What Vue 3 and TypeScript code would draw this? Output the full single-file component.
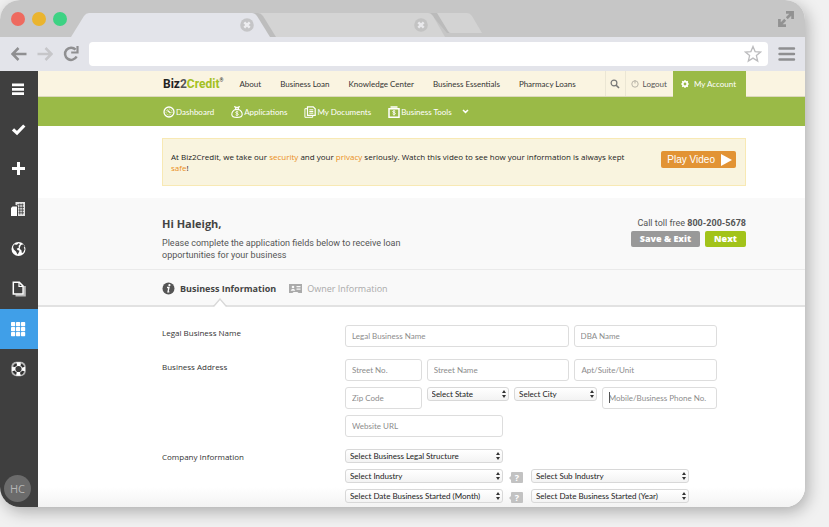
<script setup lang="ts">
import { ref } from 'vue'

interface NavLink {
  label: string
  icon?: string
}

const siteLinks: string[] = ['About', 'Business Loan', 'Knowledge Center', 'Business Essentials', 'Pharmacy Loans']
const accountLinks: NavLink[] = [
  { label: 'Dashboard', icon: 'gauge' },
  { label: 'Applications', icon: 'bag' },
  { label: 'My Documents', icon: 'docs' },
  { label: 'Business Tools', icon: 'tools' },
]
const sideItems: NavLink[] = [
  { label: 'Menu', icon: 'menu' },
  { label: 'Tasks', icon: 'check' },
  { label: 'Add', icon: 'plus' },
  { label: 'Companies', icon: 'building' },
  { label: 'Web', icon: 'globe' },
  { label: 'Files', icon: 'files' },
  { label: 'Apps', icon: 'grid' },
  { label: 'Help', icon: 'buoy' },
]
const activeItem = ref<string>('Apps')
const gridCells: number[] = [0, 5, 10]
</script>

<template>
  <div class="page">
    <div class="window">
      <header class="tab-bar">
        <svg class="tab-shapes" width="490" height="37" viewBox="0 0 490 37" aria-hidden="true">
          <path d="M430 13h8l12 20h-3z" fill="#bbb" />
          <path d="M437 13h30q3 0 5 3l10 17h-31q-2 0-3-2z" fill="#d3d3d3" />
          <path d="M256 13h172q3 0 5 3l12 21H262z" fill="#d4d4d4" />
          <path d="M252 13h6q3 0 5 3l13 21h-8z" fill="#bdbdbd" />
          <path d="M71 37l13-21q2-3 5-3h163q3 0 5 3l13 21z" fill="#e3e4ea" />
        </svg>
        <span class="dots"><i class="dot red"></i><i class="dot amber"></i><i class="dot green"></i></span>
        <button class="close first" aria-label="Close tab">
          <svg width="14" height="14" viewBox="0 0 14 14"><circle cx="7" cy="7" r="6.8" fill="#c5c5c7" /><path d="M4.3 4.3l5.4 5.4M9.7 4.3L4.3 9.7" stroke="#ededf0" stroke-width="2.4" /></svg>
        </button>
        <button class="close second" aria-label="Close tab">
          <svg width="14" height="14" viewBox="0 0 14 14"><circle cx="7" cy="7" r="6.8" fill="#c3c3c3" /><path d="M4.3 4.3l5.4 5.4M9.7 4.3L4.3 9.7" stroke="#e9e9ec" stroke-width="2.4" /></svg>
        </button>
        <button class="expand" aria-label="Full screen">
          <svg width="16" height="16" viewBox="0 0 16 16" fill="none" stroke="#929292" stroke-width="2.700"><path d="M8 1.400h6.600V8M14 2L8.800 7.200" /><path d="M1.400 8v6.600H8M2 14l5.200-5.200" /></svg>
        </button>
      </header>

      <div class="toolbar">
        <button aria-label="Back"><svg width="16" height="14" viewBox="0 0 16 14"><path d="M15.500 7H2M7.500 1L1.500 7l6 6" fill="none" stroke="#8f8f91" stroke-width="2.500" /></svg></button>
        <button aria-label="Forward"><svg width="16" height="14" viewBox="0 0 16 14"><path d="M.5 7H14M8.500 1l6 6-6 6" fill="none" stroke="#c6c6c9" stroke-width="2.500" /></svg></button>
        <button aria-label="Reload"><svg width="16" height="16" viewBox="0 0 16 16"><path d="M12.600 3.600A6.100 6.100 0 1 0 13.600 10.500" fill="none" stroke="#8f8f91" stroke-width="2.500" /><path d="M14.500 0v6.500H8.200" fill="none" stroke="#8f8f91" stroke-width="2.200" /></svg></button>
        <label class="address">
          <input type="text" aria-label="Address" />
          <svg width="18" height="18" viewBox="0 0 18 18"><path d="M9 1.500l2.100 5.100 5.500.4-4.200 3.600 1.300 5.400L9 13.100 4.300 16l1.300-5.400L1.400 7l5.500-.4z" fill="none" stroke="#bcbcbe" stroke-width="1.300" /></svg>
        </label>
        <button aria-label="Browser menu"><svg width="18" height="14" viewBox="0 0 18 14"><path d="M1.500 1.500h14.500M1.500 7h14.500M1.500 12.500h14.500" stroke="#8f8f91" stroke-width="2.400" stroke-linecap="round" /></svg></button>
      </div>

      <div class="body">
        <aside class="sidebar">
          <button v-for="item in sideItems" :key="item.label" class="side-item" :class="{ active: item.label === activeItem }" :aria-label="item.label" @click="activeItem = item.label">
            <svg width="16" height="16" viewBox="0 0 16 16">
              <path v-if="item.icon === 'menu'" d="M1 1.500h12v2.800H1zM1 5.900h12v2.800H1zM1 10.300h12v2.800H1z" fill="#fff" />
              <path v-else-if="item.icon === 'check'" d="M2 8.300l4 3.800 7.300-7.600" fill="none" stroke="#fff" stroke-width="3.200" />
              <path v-else-if="item.icon === 'plus'" d="M7.500 1v13M1 7.500h13" stroke="#fff" stroke-width="3" />
              <template v-else-if="item.icon === 'building'">
                <path d="M0 7l1.500-1.400H6V15H0z" fill="#fff" />
                <path d="M4.500 4V1H14v14H7V4.600z" fill="#e4e4e4" />
                <path d="M6 3.700h6.500M7.500 6.400H13M7.500 9.100H13M7.500 11.800H13M8.800 2.500v11M11.300 2.500v11" stroke="#3f3f3f" stroke-width=".8" />
              </template>
              <template v-else-if="item.icon === 'globe'">
                <circle cx="7.500" cy="8" r="7" fill="#fff" />
                <path d="M3 3.500l3 .2 1.600-1.500 1.400.8-1.500 2 .5 1.500-2.300 1.200.8 1.300 2 .8-1 2.200-1 1.500-1.500-3-2.200-2L2 6zM10 4l2.600-.8 1.200 2.600-1 .6.8 1.800-1.400 3.300-1.300.6-.6-3-1.600-1 .3-2z" fill="#3f3f3f" />
              </template>
              <template v-else-if="item.icon === 'files'">
                <path d="M4.500 14.500h9.400V5" fill="none" stroke="#bbb" stroke-width="1.800" />
                <path d="M2.300 1.300h6l3.800 3.800V13H2.300z" fill="none" stroke="#fff" stroke-width="1.500" />
                <path d="M8 1.500v4h4.300" fill="none" stroke="#fff" stroke-width="1.200" />
              </template>
              <template v-else-if="item.icon === 'grid'">
                <template v-for="y in gridCells" :key="y"><rect v-for="x in gridCells" :key="x" :x="x" :y="y + 1" width="4.200" height="4.200" rx=".7" fill="#fff" /></template>
              </template>
              <template v-else>
                <rect x=".3" y=".8" width="14.400" height="14.400" rx="5" fill="#b5b5b5" />
                <circle cx="7.500" cy="8" r="5.100" fill="#fff" stroke="#303030" stroke-width="2.400" stroke-dasharray="4 4" stroke-dashoffset="-2" />
                <path d="M5.200 1.300h4.600L8.800 4.800H6.200zM5.200 14.700h4.600l-1-3.500H6.200zM.9 5.700v4.600l3.400-1.100V6.800zM14.100 5.700v4.600l-3.400-1.100V6.800z" fill="#fff" />
                <circle cx="7.500" cy="8" r="3.100" fill="#3c3c3c" />
              </template>
            </svg>
          </button>
          <span class="avatar">HC</span>
        </aside>

        <main class="content">
          <nav class="site-nav">
            <a href="#" class="logo">Biz<span class="two">2</span><span class="credit">Credit</span><sup>®</sup></a>
            <a v-for="link in siteLinks" :key="link" href="#" class="site-link">{{ link }}</a>
            <span class="user-links">
              <button class="search" aria-label="Search"><svg width="10" height="10" viewBox="0 0 10 10"><circle cx="4" cy="4" r="2.900" fill="none" stroke="#777" stroke-width="1.200" /><path d="M6.200 6.200L9 9" stroke="#777" stroke-width="1.600" /></svg></button>
              <a href="#" class="logout"><svg width="8" height="8" viewBox="0 0 8 8"><circle cx="4" cy="4" r="3.200" fill="none" stroke="#b8b4a8" /><path d="M4 0v3.500" stroke="#b8b4a8" /></svg>Logout</a>
              <a href="#" class="account"><svg width="8" height="8" viewBox="0 0 8 8"><circle cx="4" cy="4" r="2.300" fill="none" stroke="#fff" stroke-width="1.800" /><path d="M4 0v1.500M4 6.500V8M0 4h1.500M6.500 4H8M1.200 1.200l1 1M5.800 5.800l1 1M1.200 6.800l1-1M5.800 2.200l1-1" stroke="#fff" stroke-width="1.200" /></svg>My Account</a>
            </span>
          </nav>

          <nav class="account-nav">
            <a v-for="link in accountLinks" :key="link.label" href="#">
              <svg width="12" height="12" viewBox="0 0 12 12" fill="none" stroke="#fff">
                <template v-if="link.icon === 'gauge'"><circle cx="6" cy="6" r="5" stroke-width="1.300" /><circle cx="6" cy="6" r="3" stroke-width=".8" stroke-dasharray="1 1" /><path d="M4.500 4.500l3 2.500" stroke-width="1.300" /></template>
                <template v-else-if="link.icon === 'bag'"><path d="M4.300 3.600C1.500 5 .8 7 .8 8.400c0 2.200 1.800 3 5.200 3s5.200-.8 5.200-3c0-1.400-.7-3.400-3.500-4.800zM3.900.8L5 3.200h2L8.100.8 6 1.600z" stroke-width="1.100" /><path d="M7.300 6.100c-.6-.6-2.600-.6-2.600.4 0 1.200 2.700.7 2.700 1.900 0 1.100-2.200 1.100-2.800.3M6 5v5" stroke-width=".8" /></template>
                <template v-else-if="link.icon === 'docs'"><path d="M3.500.8h5.700l2 2v6.500H3.500z" stroke-width="1.200" /><path d="M3 2.700H.9v8.600h7.800V9.800M5.300 3.800h4M5.300 5.500h4M5.300 7.200h4" /></template>
                <template v-else><path d="M1 2.800h10v8.400H1zM2.500 1h7" stroke-width="1.500" /><path d="M7.300 5.200c-.6-.6-2.600-.6-2.600.4 0 1.200 2.700.7 2.700 1.900 0 1.100-2.200 1.100-2.800.3M6 4.300v5.200" stroke-width=".9" /></template>
              </svg>
              {{ link.label }}
              <svg v-if="link.icon === 'tools'" class="chevron" width="7" height="5" viewBox="0 0 7 5"><path d="M1 1l2.500 2.400L6 1" fill="none" stroke="#fff" stroke-width="1.500" /></svg>
            </a>
          </nav>

          <section class="notice">
            <p>At Biz2Credit, we take our <a href="#">security</a> and your <a href="#">privacy</a> seriously. Watch this video to see how your information is always kept <a href="#">safe</a>!</p>
            <button class="play">Play Video<svg width="11" height="12" viewBox="0 0 11 12"><path d="M0 0l11 6-11 6z" fill="#fff" /></svg></button>
          </section>

          <section class="greeting">
            <div class="hello">
              <h1>Hi Haleigh,</h1>
              <p>Please complete the application fields below to receive loan opportunities for your business</p>
            </div>
            <div class="actions">
              <p>Call toll free <strong>800-200-5678</strong></p>
              <div class="buttons">
                <button class="save">Save &amp; Exit</button>
                <button class="next">Next</button>
              </div>
            </div>
          </section>

          <nav class="steps">
            <a href="#" class="step current">
              <svg width="13" height="13" viewBox="0 0 13 13"><circle cx="6.500" cy="6.500" r="6" fill="#555" /><circle cx="7.400" cy="3.200" r="1.100" fill="#fff" /><path d="M5 5.500h2l-1 4.300h1.300" fill="none" stroke="#fff" stroke-width="1.300" /></svg>
              Business Information
              <svg class="pointer" width="14" height="9" viewBox="0 0 14 9"><path d="M0 8.500L1 8l6-7 6 7 1 .5V9H0z" fill="#fff" /><path d="M0 8h1l6-7 6 7h1" fill="none" stroke="#d8d8d8" stroke-width="1.300" /></svg>
            </a>
            <a href="#" class="step">
              <svg width="13" height="10" viewBox="0 0 13 10"><path d="M0 0h13v9H9.500L8.500 8h-4l-1 1H0z" fill="#aaa" /><circle cx="4" cy="3" r="1.300" fill="#f8f8f8" /><path d="M1.800 6.800c0-2.400 4.400-2.400 4.400 0zM7.500 2h4v1.200h-4zM7.500 4.500h4v1.200h-4z" fill="#f8f8f8" /></svg>
              Owner Information
            </a>
          </nav>

          <form class="form" @submit.prevent>
            <fieldset class="group">
              <label class="title" for="legal">Legal Business Name</label>
              <div class="rows">
                <div class="row name-row">
                  <input id="legal" type="text" placeholder="Legal Business Name" />
                  <input type="text" placeholder="DBA Name" aria-label="DBA Name" />
                </div>
              </div>
            </fieldset>
            <fieldset class="group">
              <label class="title" for="street">Business Address</label>
              <div class="rows">
                <div class="row street-row">
                  <input id="street" type="text" placeholder="Street No." />
                  <input type="text" placeholder="Street Name" aria-label="Street Name" />
                  <input type="text" placeholder="Apt/Suite/Unit" aria-label="Apt/Suite/Unit" />
                </div>
                <div class="row city-row">
                  <input type="text" placeholder="Zip Code" aria-label="Zip Code" />
                  <span class="select"><select aria-label="State"><option>Select State</option></select><svg width="4" height="8" viewBox="0 0 4 8"><path d="M2 0l2 3H0zM2 8L0 5h4z" fill="#333" /></svg></span>
                  <span class="select"><select aria-label="City"><option>Select City</option></select><svg width="4" height="8" viewBox="0 0 4 8"><path d="M2 0l2 3H0zM2 8L0 5h4z" fill="#333" /></svg></span>
                  <span class="phone"><i class="caret"></i><input type="tel" placeholder="Mobile/Business Phone No." aria-label="Phone" /></span>
                </div>
                <div class="row half">
                  <input type="url" placeholder="Website URL" aria-label="Website URL" />
                </div>
              </div>
            </fieldset>
            <fieldset class="group">
              <label class="title" for="structure">Company Information</label>
              <div class="rows">
                <div class="pair">
                  <span class="select"><select id="structure"><option>Select Business Legal Structure</option></select><svg width="4" height="8" viewBox="0 0 4 8"><path d="M2 0l2 3H0zM2 8L0 5h4z" fill="#333" /></svg></span>
                </div>
                <div class="pair">
                  <span class="select"><select aria-label="Industry"><option>Select Industry</option></select><svg width="4" height="8" viewBox="0 0 4 8"><path d="M2 0l2 3H0zM2 8L0 5h4z" fill="#333" /></svg></span>
                  <button class="help" type="button">?</button>
                  <span class="select"><select aria-label="Sub industry"><option>Select Sub Industry</option></select><svg width="4" height="8" viewBox="0 0 4 8"><path d="M2 0l2 3H0zM2 8L0 5h4z" fill="#333" /></svg></span>
                </div>
                <div class="pair">
                  <span class="select"><select aria-label="Start month"><option>Select Date Business Started (Month)</option></select><svg width="4" height="8" viewBox="0 0 4 8"><path d="M2 0l2 3H0zM2 8L0 5h4z" fill="#333" /></svg></span>
                  <button class="help" type="button">?</button>
                  <span class="select"><select aria-label="Start year"><option>Select Date Business Started (Year)</option></select><svg width="4" height="8" viewBox="0 0 4 8"><path d="M2 0l2 3H0zM2 8L0 5h4z" fill="#333" /></svg></span>
                </div>
              </div>
            </fieldset>
          </form>
        </main>
      </div>
    </div>
  </div>
</template>

<style>
body { background: #f1f1f1; }
</style>

<style scoped>
* { box-sizing: border-box; }
.page { min-height: 100vh; display: flex; padding: 0 24px 20px 0; font-family: "Open Sans", "Noto Sans", sans-serif; font-size: 8px; line-height: 12px; color: #444; overflow: hidden; }
.window { flex: 1; min-width: 0; display: flex; flex-direction: column; border-radius: 20px; overflow: hidden; background: #fff; box-shadow: 3px 5px 16px rgba(0, 0, 0, .28); }
button { border: 0; padding: 0; background: none; font: inherit; color: inherit; cursor: pointer; }
a { color: inherit; text-decoration: none; }
svg { display: block; flex: none; }
p, h1 { margin: 0; }
input, select { font: inherit; width: 100%; min-width: 0; }

.tab-bar { position: relative; height: 37px; flex: none; display: flex; align-items: center; background: #c6c6c6; padding: 0 11px; }
.tab-shapes { position: absolute; left: 0; top: 0; }
.dots { display: flex; gap: 7px; }
.dot { width: 14px; height: 14px; border-radius: 50%; }
.red { background: #ee6a5f; }
.amber { background: #eab42e; }
.green { background: #3dd283; }
.close { position: relative; margin-top: 12px; }
.first { margin-left: 173px; }
.second { margin-left: 160px; }
.expand { margin-left: auto; }

.toolbar { height: 34px; flex: none; display: flex; align-items: center; gap: 10px; padding: 0 9px 0 11px; background: #e3e4ea; }
.address { flex: 1; height: 24px; display: flex; align-items: center; padding-right: 6px; border-radius: 4px; background: #fff; }
.address input { border: 0; background: none; outline: 0; height: 20px; }

.body { flex: 1; display: flex; }
.sidebar { width: 38px; flex: none; display: flex; flex-direction: column; background: #3f3f3f; padding-bottom: 5px; }
.side-item { height: 40px; display: flex; align-items: center; justify-content: center; }
.side-item:first-child { height: 38px; }
.side-item.active { background: #409fe8; }
.avatar { width: 27px; height: 27px; margin: auto 0 0 4px; border-radius: 50%; background: #6b6b6b; color: #b5b5b5; font-size: 11px; line-height: 27px; text-align: center; }

.content { flex: 1; min-width: 0; }
.site-nav, .account-nav, .form input, .form select { font-family: "Lato", "Open Sans", sans-serif; }
.site-nav { height: 26px; display: flex; align-items: center; padding: 0 59px 0 125px; background: #faf4e1; border-bottom: 1px solid #dcd9bd; white-space: nowrap; color: #333; }
.logo { font-family: "Roboto", sans-serif; font-size: 12px; line-height: 16px; font-weight: bold; color: #222; }
.two { color: #555; }
.credit { color: #a3c022; }
.logo sup { font-size: 5px; line-height: 5px; font-weight: normal; vertical-align: 6px; }
.site-link { margin-left: 19px; }
.logo + .site-link { margin-left: 16px; }
.user-links { display: flex; align-self: stretch; margin-left: auto; }
.user-links > * { display: flex; align-items: center; }
.search { padding: 0 5px 0 4px; border-left: 1px solid #ebe6d4; border-right: 1px solid #ebe6d4; }
.logout { gap: 4px; padding: 0 6px 0 5px; color: #555; }
.account { gap: 5px; padding: 0 10px 0 8px; height: 26px; background: #9aba47; color: #fff; }

.account-nav { height: 29px; display: flex; align-items: center; gap: 17px; padding: 0 59px 0 125px; background: #9aba47; color: #fff; white-space: nowrap; }
.account-nav a { display: flex; align-items: center; gap: 1px; }
.chevron { margin-left: 9px; }

.notice { display: flex; justify-content: space-between; align-items: flex-start; margin: 12px 59px 12px 124px; padding: 12px 9px 12px 8px; border: 1px solid #f8e9b4; background: #f9f4df; line-height: 11px; color: #222; }
.notice p { flex: 0 1 464px; }
.notice a { color: #ea8f1c; }
.play { display: flex; align-items: center; gap: 6px; height: 17px; padding: 0 4px 0 6px; border-radius: 2px; background: #e29334; color: #fff; font: 10px/16px "Liberation Sans", sans-serif; white-space: nowrap; }

.greeting { display: flex; justify-content: space-between; padding: 19px 59px 8px 124px; background: #f9f9f9; border-bottom: 1px solid #eaeaea; color: #555; }
.greeting p { font-family: "Roboto", "Open Sans", sans-serif; font-size: 9px; }
.hello { width: 250px; line-height: 12px; }
.hello h1 { margin-bottom: 6px; font-size: 11px; line-height: 14px; color: #444; }
.actions { text-align: right; }
.buttons { display: flex; justify-content: flex-end; gap: 5px; margin-top: 2px; }
.buttons button { height: 16px; border-radius: 2px; color: #fff; font-weight: 800; font-size: 9px; line-height: 14px; }
.save { padding: 0 9px; background: #999; }
.next { padding: 0 9px; background: #a2c31a; }

.steps { height: 37px; display: flex; align-items: center; gap: 13px; padding: 0 59px 0 124px; background: #f9f9f9; border-bottom: 2px solid #e2e2e2; font-size: 9px; color: #aaa; }
.step { position: relative; display: flex; align-items: center; gap: 5px; height: 35px; padding-top: 2px; }
.current { font-weight: bold; color: #444; }
.pointer { position: absolute; left: 51px; bottom: -2px; }

.form { display: flex; flex-direction: column; gap: 12px; padding: 18px 88px 4px 124px; background: linear-gradient(#fff 90%, #f3f3f3); color: #333; }
.group { display: flex; margin: 0; padding: 0; border: 0; min-width: 0; }
.title { width: 183px; flex: none; padding-top: 2px; }
.rows { flex: 1; min-width: 0; display: flex; flex-direction: column; gap: 6px; }
.row { display: grid; gap: 5px; align-items: start; }
.name-row { grid-template-columns: 223fr 143fr; }
.street-row { grid-template-columns: 77fr 143fr 143fr; }
.city-row { grid-template-columns: 77fr 83fr 83fr 116fr; }
.rows input { display: block; height: 22px; padding: 0 6px; border: 1px solid #ddd; border-radius: 3px; background: #fff; outline: 0; }
.rows input::placeholder { color: #8c8c8c; opacity: 1; }
.half { width: 158px; }
.phone { position: relative; }
.caret { position: absolute; left: 7px; top: 5px; width: 1px; height: 11px; background: #555; }
.select { position: relative; display: block; min-width: 0; }
.select select { display: block; appearance: none; height: 14px; padding: 0 12px 0 4px; border: 1px solid #d8d8d8; border-radius: 3px; background: linear-gradient(#fff, #f3f3f3); color: #222; line-height: 12px; }
.select svg { position: absolute; right: 3px; top: 3px; pointer-events: none; }
.pair { display: flex; align-items: flex-start; gap: 7px; }
.pair .select { flex: 0 1 158px; }
.help { position: relative; width: 12px; height: 11px; margin: 3px 1px 0 1px; background: #c2c2c2; color: #fff; font-weight: bold; font-size: 9px; line-height: 11px; border-radius: 1px; }
.help::before { content: ""; position: absolute; left: -2px; top: 4px; border: 2px solid transparent; border-left: 0; border-right-color: #c2c2c2; }
</style>
